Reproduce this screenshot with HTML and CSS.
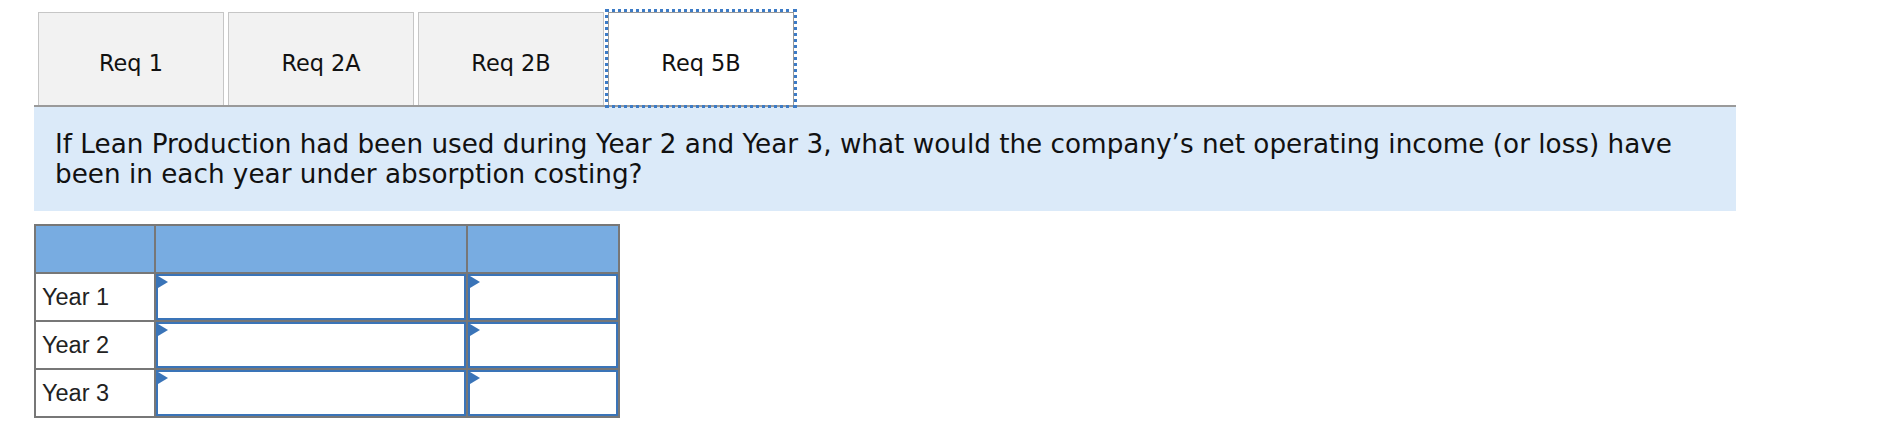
FILE: index.html
```html
<!DOCTYPE html>
<html lang="en">
<head>
<meta charset="utf-8">
<title>Req 5B</title>
<link rel="stylesheet" href="styles.css">
</head>
<body>
<div class="page">
  <div class="tabs">
    <div class="tab">Req 1</div>
    <div class="tab">Req 2A</div>
    <div class="tab">Req 2B</div>
    <div class="tab active">Req 5B</div>
  </div>
  <div class="question">If Lean Production had been used during Year 2 and Year 3, what would the company’s net operating income (or loss) have been in each year under absorption costing?</div>
  <div class="grid">
    <div class="head"></div>
    <div class="head"></div>
    <div class="head"></div>

    <div class="label">Year 1</div>
    <div class="cell"><input class="field" type="text"></div>
    <div class="cell"><input class="field" type="text"></div>

    <div class="label">Year 2</div>
    <div class="cell"><input class="field" type="text"></div>
    <div class="cell"><input class="field" type="text"></div>

    <div class="label">Year 3</div>
    <div class="cell"><input class="field" type="text"></div>
    <div class="cell"><input class="field" type="text"></div>
  </div>
</div>
</body>
</html>
```

FILE: styles.css
```css
html, body {
  margin: 0;
  padding: 0;
  background: #ffffff;
}

body {
  font-family: "DejaVu Sans", Verdana, sans-serif;
  color: #000000;
}

.page {
  padding: 12px 0 0 34px;
}

.tabs {
  display: flex;
  height: 93px;
}

.tab {
  box-sizing: border-box;
  width: 186px;
  margin-left: 4px;
  border: 1px solid #c6c6c6;
  border-bottom: none;
  background: #f2f2f2;
  display: flex;
  align-items: center;
  justify-content: center;
  padding-top: 7px;
  font-size: 22.4px;
  color: #111111;
}

.tab.active {
  background: #ffffff;
  border-color: #9a9a9a;
  outline: 3px dotted #3c7bc6;
}

.question {
  box-sizing: border-box;
  width: 1702px;
  border-top: 2px solid #9a9a9a;
  background: #dbeaf9;
  padding: 22px 21px;
  font-size: 26.25px;
  line-height: 30px;
  color: #111111;
}

.grid {
  margin-top: 13px;
  display: grid;
  grid-template-columns: 118px 310px 150px;
  grid-auto-rows: 46px;
  gap: 2px;
  padding: 2px;
  background: #777777;
  width: max-content;
}

.head {
  background: #78ace1;
}

.label {
  background: #ffffff;
  display: flex;
  align-items: center;
  padding-left: 6px;
  font-family: "Liberation Sans", Arial, sans-serif;
  font-size: 23.5px;
  color: #222222;
}

.cell {
  position: relative;
  box-sizing: border-box;
  background: #ffffff;
  border: 2px solid #3a74b8;
}

.cell::before {
  content: "";
  position: absolute;
  top: 0;
  left: 0;
  width: 0;
  height: 0;
  border-left: 10px solid #3a74b8;
  border-top: 6px solid transparent;
  border-bottom: 6px solid transparent;
}

.field {
  box-sizing: border-box;
  width: 100%;
  height: 100%;
  border: none;
  outline: none;
  background: transparent;
  padding: 0 8px;
  font-family: "Liberation Sans", Arial, sans-serif;
  font-size: 20px;
}
```
